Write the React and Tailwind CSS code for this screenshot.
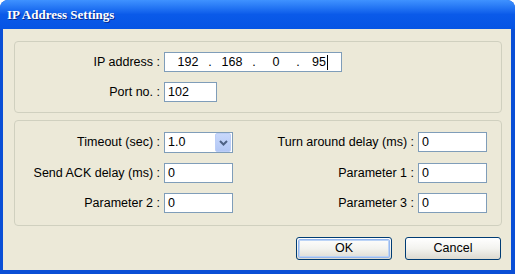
import React from 'react';

const font = { fontFamily: '"Liberation Sans", Arial, sans-serif' };

function Field({ value, width = 'w-[69px]' }) {
  return (
    <div className={`${width} h-[20px] border border-[#7f9db9] bg-white flex items-center pl-[3px] text-[12.5px] text-black`}>
      {value}
    </div>
  );
}

function Label({ children }) {
  return <div className="text-right text-[12.5px] text-black whitespace-nowrap self-center">{children}</div>;
}

function IpField() {
  const parts = ['192', '168', '0', '95'];
  return (
    <div className="col-span-3 w-[178px] h-[20px] border border-[#7f9db9] bg-white flex items-center pl-[3px] text-[12.5px] text-black">
      {parts.map((p, i) => (
        <React.Fragment key={i}>
          <div className="w-[40px] text-center flex justify-center items-center">
            {p}
            {i === 3 && <span className="inline-block w-px h-[15px] bg-black ml-px" />}
          </div>
          {i < 3 && <div className="w-[4px] text-center">.</div>}
        </React.Fragment>
      ))}
    </div>
  );
}

function Select() {
  return (
    <div className="w-[69px] h-[21px] border border-[#7f9db9] bg-white flex items-center text-[12.5px] text-black">
      <div className="flex-1 pl-[3px]">1.0</div>
      <div className="w-[16px] h-[19px] mr-px bg-gradient-to-b from-[#c8d8fb] to-[#b2c7f5] border border-[#bccef7] rounded-[2px] flex items-center justify-center">
        <svg width="9" height="6" viewBox="0 0 9 6">
          <path d="M1 1 L4.5 4.5 L8 1" stroke="#4d6185" strokeWidth="2" fill="none" />
        </svg>
      </div>
    </div>
  );
}

function Button({ children, isDefault }) {
  return (
    <div className="w-[96px] h-[23px] rounded-[3px] border border-[#003c74] bg-gradient-to-b from-white via-[#f3f3ef] to-[#dcdad0] p-px">
      <div className={`h-full rounded-[2px] flex items-center justify-center text-[12.5px] text-black ${isDefault ? 'border border-[#97b8ef] shadow-[inset_0_0_0_1px_#bcd4f6]' : ''}`}>
        {children}
      </div>
    </div>
  );
}

export default function App() {
  return (
    <div style={font} className="w-[515px] h-[274px] flex flex-col bg-[#0a4fd6] rounded-t-[8px] overflow-hidden">
      {/* title bar */}
      <div className="h-[29px] shrink-0 bg-gradient-to-b from-[#3f92ff] via-[#0a5ae9] to-[#0654e4] flex items-center pl-[7px]">
        <span
          className="text-white font-bold text-[13px] [text-shadow:1px_1px_0_#0a2a8a]"
          style={{ fontFamily: '"Liberation Serif", "Times New Roman", serif' }}
        >
          IP Address Settings
        </span>
      </div>

      {/* client */}
      <div className="flex-1 ml-[3px] mr-[4px] mb-[4px] bg-[#ece9d8] flex flex-col pl-[11px] pr-[9px] pt-[12px]">
        <div className="w-[488px] h-[72px] border border-[#d0d0bf] rounded-[4px] pt-[10px] grid grid-cols-[145px_69px_177px_69px] gap-x-1 gap-y-[10px] content-start">
          <Label>IP address :</Label>
          <IpField />
          <Label>Port no. :</Label>
          <div className="col-span-3">
            <Field value="102" width="w-[53px]" />
          </div>
        </div>

        <div className="w-[488px] h-[106px] mt-[7px] border border-[#d0d0bf] rounded-[4px] pt-[11px] grid grid-cols-[145px_69px_177px_69px] gap-x-1 gap-y-[10px] content-start">
          <Label>Timeout (sec) :</Label>
          <Select />
          <Label>Turn around delay (ms) :</Label>
          <Field value="0" />
          <Label>Send ACK delay (ms) :</Label>
          <Field value="0" />
          <Label>Parameter 1 :</Label>
          <Field value="0" />
          <Label>Parameter 2 :</Label>
          <Field value="0" />
          <Label>Parameter 3 :</Label>
          <Field value="0" />
        </div>

        <div className="flex justify-end gap-[13px] mt-[11px] pr-px">
          <Button isDefault>OK</Button>
          <Button>Cancel</Button>
        </div>
      </div>
    </div>
  );
}
